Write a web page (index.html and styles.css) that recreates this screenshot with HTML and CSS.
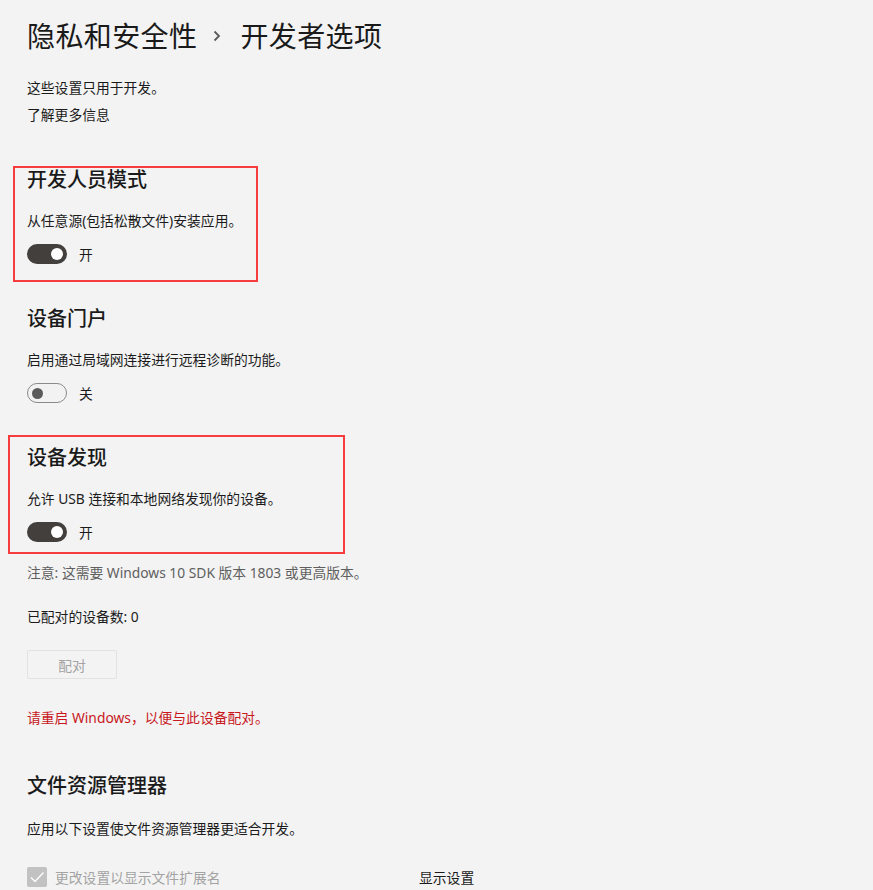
FILE: index.html
```html
<!DOCTYPE html>
<html lang="zh-CN">
<head>
<meta charset="utf-8">
<title>开发者选项</title>
<link rel="stylesheet" href="styles.css">
</head>
<body>
<div class="page">
  <h1 class="title">
    <span>隐私和安全性</span>
    <svg class="chev" width="8" height="12" viewBox="0 0 8 12"><path d="M1.5 1.5 L6 6 L1.5 10.5" fill="none" stroke="#5a5a5a" stroke-width="1.8"/></svg>
    <span>开发者选项</span>
  </h1>

  <p class="text intro">这些设置只用于开发。</p>
  <p class="text link">了解更多信息</p>

  <section class="group g-dev">
    <h2 class="heading">开发人员模式</h2>
    <p class="text desc">从任意源(包括松散文件)安装应用。</p>
    <div class="toggle-row">
      <span class="toggle on"><span class="knob"></span></span>
      <span class="toggle-label">开</span>
    </div>
    <div class="mark mark-1"></div>
  </section>

  <section class="group">
    <h2 class="heading">设备门户</h2>
    <p class="text desc">启用通过局域网连接进行远程诊断的功能。</p>
    <div class="toggle-row">
      <span class="toggle off"><span class="knob"></span></span>
      <span class="toggle-label">关</span>
    </div>
  </section>

  <section class="group g-disc">
    <h2 class="heading">设备发现</h2>
    <p class="text desc">允许 USB 连接和本地网络发现你的设备。</p>
    <div class="toggle-row">
      <span class="toggle on"><span class="knob"></span></span>
      <span class="toggle-label">开</span>
    </div>
    <div class="mark mark-2"></div>
  </section>

  <p class="text note">注意: 这需要 Windows 10 SDK 版本 1803 或更高版本。</p>
  <p class="text paired">已配对的设备数: 0</p>
  <button class="btn" disabled>配对</button>
  <p class="text warn">请重启 Windows，以便与此设备配对。</p>

  <section class="group g-explorer">
    <h2 class="heading">文件资源管理器</h2>
    <p class="text desc2">应用以下设置使文件资源管理器更适合开发。</p>
    <div class="check-row">
      <div class="check-cell">
        <span class="checkbox">
          <svg width="20" height="20" viewBox="0 0 20 20"><path d="M4 10.5 L8 14.5 L16.5 5.5" fill="none" stroke="#fff" stroke-width="1.3"/></svg>
        </span>
        <span class="check-label">更改设置以显示文件扩展名</span>
      </div>
      <span class="show">显示设置</span>
    </div>
  </section>
</div>
</body>
</html>
```

FILE: styles.css
```css
html, body {
  margin: 0;
  padding: 0;
  background: #f3f3f3;
}
body {
  font-family: "Noto Sans", "Noto Sans CJK SC", sans-serif;
  color: #1b1b1b;
  height: 890px;
  overflow: hidden;
}
.page {
  position: relative;
  padding: 15px 0 0 27px;
}
.title {
  margin: 0;
  display: flex;
  align-items: center;
  height: 40px;
  font-size: 28px;
  font-weight: 400;
  letter-spacing: 0.4px;
  color: #1a1a1a;
}
.chev {
  margin: 2px 19px 0 16px;
}
.text {
  margin: 0;
  font-size: 13.8px;
  line-height: 20px;
}
.intro { margin-top: 23px; }
.link { margin-top: 7px; }
.group { position: relative; }
.heading {
  margin: 0;
  font-size: 20px;
  line-height: 28px;
  font-weight: 500;
  color: #1a1a1a;
}
.g-dev { margin-top: 41px; }
.group + .group { margin-top: 41px; }
.desc { margin-top: 17px; }
.toggle-row {
  margin-top: 13px;
  display: flex;
  align-items: center;
  height: 20px;
}
.toggle {
  box-sizing: border-box;
  width: 40px;
  height: 20px;
  border-radius: 10px;
  display: flex;
  align-items: center;
}
.toggle.on {
  background: #423f3d;
  justify-content: flex-end;
  padding-right: 4px;
}
.toggle.on .knob {
  width: 12px;
  height: 12px;
  border-radius: 50%;
  background: #fff;
}
.toggle.off {
  border: 1px solid #8a8a8a;
  background: #f2f2f2;
  padding-left: 4px;
}
.toggle.off .knob {
  width: 11px;
  height: 11px;
  border-radius: 50%;
  background: #5b5b5b;
}
.toggle-label {
  margin-left: 12px;
  font-size: 13.8px;
}
.note {
  margin-top: 21px;
  color: #5f5f5f;
}
.paired { margin-top: 24px; }
.btn {
  display: block;
  margin-top: 23px;
  width: 90px;
  height: 29px;
  box-sizing: border-box;
  border: 1px solid #e2e2e2;
  background: #f3f3f3;
  color: #a3a3a3;
  font-family: inherit;
  font-size: 13.8px;
  border-radius: 2px;
  padding: 0;
}
.warn {
  margin-top: 29px;
  color: #c8181d;
}
.g-explorer { margin-top: 44px; }
.desc2 { margin-top: 19px; }
.check-row {
  margin-top: 28px;
  display: flex;
  align-items: center;
  height: 20px;
}
.check-cell {
  width: 392px;
  display: flex;
  align-items: center;
}
.checkbox {
  width: 20px;
  height: 20px;
  background: #c2c2c2;
  border-radius: 2px;
  display: flex;
}
.check-label {
  margin-left: 8px;
  font-size: 13.8px;
  color: #a3a3a3;
}
.show {
  font-size: 13.8px;
}
.mark {
  position: absolute;
  border: 2px solid #f63c3c;
  pointer-events: none;
}
.mark-1 {
  left: -14px;
  top: 0;
  width: 241px;
  height: 112px;
}
.mark-2 {
  left: -19px;
  top: -9px;
  width: 333px;
  height: 115px;
}
```
